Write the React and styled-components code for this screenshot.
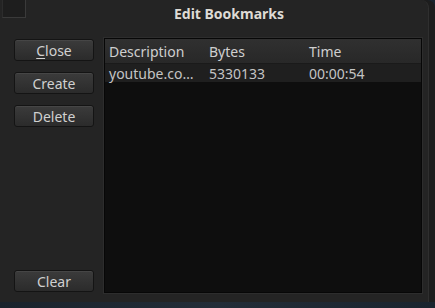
import React from "react";
import styled, { createGlobalStyle } from "styled-components";

const GlobalStyle = createGlobalStyle`
	html, body {
		margin: 0;
		padding: 0;
		background: #18202a;
		font-family: "Noto Sans", "DejaVu Sans", sans-serif;
	}
`;

const columns = [
	{ key: "description", label: "Description", width: 100 },
	{ key: "bytes", label: "Bytes", width: 100 },
	{ key: "time", label: "Time", width: 113 }
];

const bookmarks = [
	{ description: "youtube.co…", bytes: "5330133", time: "00:00:54" }
];

const App = () => {
	return (
		<>
			<GlobalStyle />
			<Desktop>
				<Window>
					<CornerBox />
					<TitleBar>Edit Bookmarks</TitleBar>
					<Content>
						<Sidebar>
							<Button>
								<u>C</u>lose
							</Button>
							<Button>Create</Button>
							<Button>Delete</Button>
							<Button bottom>Clear</Button>
						</Sidebar>
						<TableFrame>
							<HeaderRow>
								{columns.map(c => (
									<Cell key={c.key} width={c.width}>
										{c.label}
									</Cell>
								))}
							</HeaderRow>
							{bookmarks.map((b, i) => (
								<DataRow key={i}>
									{columns.map(c => (
										<Cell key={c.key} width={c.width}>
											{b[c.key]}
										</Cell>
									))}
								</DataRow>
							))}
						</TableFrame>
					</Content>
				</Window>
			</Desktop>
		</>
	);
};

export default App;

const Desktop = styled.div`
	width: 435px;
	height: 308px;
	overflow: hidden;
	background: linear-gradient(90deg, #1a232c, #232d38 50%, #1a242e);
`;

const Window = styled.div`
	position: relative;
	width: 428px;
	height: 302px;
	background: #242424;
	border-right: 1px solid #2f2f2f;
	border-top-right-radius: 8px;
	box-shadow: 6px 0 0 #1d1d1d;
	display: flex;
	flex-direction: column;
`;

const CornerBox = styled.div`
	position: absolute;
	left: 2px;
	top: 0;
	width: 22px;
	height: 17px;
	background: #1e1e1e;
	border-left: 1px solid #2c2c2c;
	border-right: 1px solid #3a3a3a;
	border-bottom: 1px solid #3a3a3a;
`;

const TitleBar = styled.div`
	height: 27px;
	display: flex;
	align-items: center;
	justify-content: center;
	padding-left: 30px;
	color: #dedbd5;
	font-size: 14px;
	font-weight: 700;
`;

const Content = styled.div`
	flex: 1;
	display: flex;
	gap: 10px;
	padding: 11px 6px 9px 14px;
`;

const Sidebar = styled.div`
	width: 80px;
	display: flex;
	flex-direction: column;
	gap: 11px;
	padding-top: 1px;
`;

const Button = styled.div`
	height: 20px;
	display: flex;
	align-items: center;
	justify-content: center;
	margin-top: ${p => (p.bottom ? "auto" : "0")};
	margin-bottom: ${p => (p.bottom ? "1px" : "0")};
	border: 1px solid #141414;
	border-radius: 3px;
	background: linear-gradient(#3b3b3b, #2b2b2b);
	box-shadow: inset 0 1px 0 rgba(255, 255, 255, 0.06);
	color: #d0d0d0;
	font-size: 14px;

	u {
		text-decoration-thickness: 1px;
		text-underline-offset: 2px;
	}
`;

const TableFrame = styled.div`
	flex: 1;
	background: #0e0e0e;
	border: 1px solid #070707;
	outline: 1px solid #2d2d2d;
	display: flex;
	flex-direction: column;
`;

const HeaderRow = styled.div`
	height: 24px;
	display: flex;
	align-items: center;
	background: linear-gradient(#303030, #282828);
	border-bottom: 1px solid #1a1a1a;
	color: #cfcfcf;
	font-size: 14px;
`;

const DataRow = styled.div`
	height: 18px;
	display: flex;
	align-items: center;
	background: #1f1f1f;
	color: #c4c4c4;
	font-size: 14px;
`;

const Cell = styled.div`
	width: ${p => p.width}px;
	padding-left: 4px;
	box-sizing: border-box;
	white-space: nowrap;
	overflow: hidden;
`;
